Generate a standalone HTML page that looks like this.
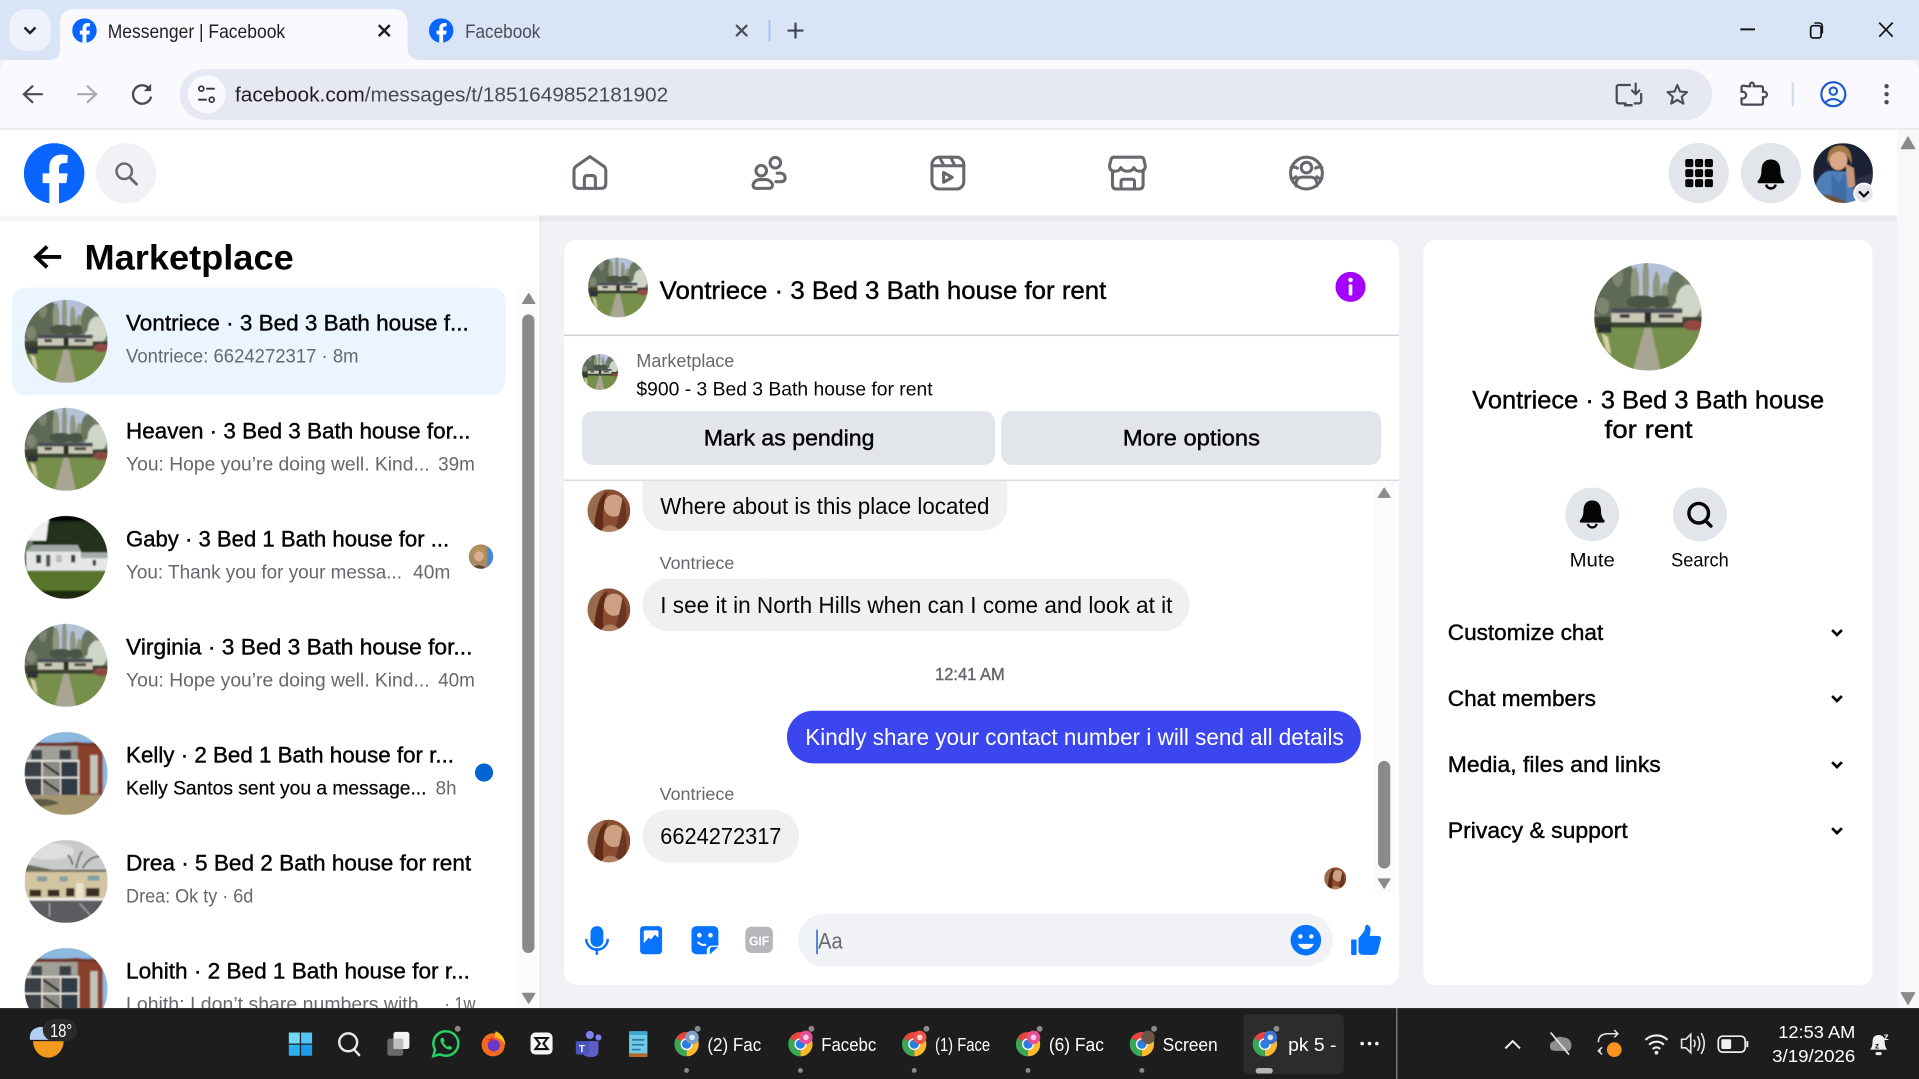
<!DOCTYPE html>
<html><head><meta charset="utf-8"><title>Messenger | Facebook</title>
<style>
html,body{margin:0;padding:0;width:1919px;height:1079px;overflow:hidden;background:#f0f2f5}
svg{display:block;position:absolute;left:0;top:0}
text{font-family:"Liberation Sans",sans-serif;white-space:pre}
.n{font-size:18.5px;fill:#050505;stroke:#050505;stroke-width:.35px}
.s{font-size:16px;fill:#65686c}
.b{font-size:18.5px;fill:#050505}
.t{font-size:15px;fill:#fff}
</style></head><body>
<svg width="1919" height="1079" viewBox="0 0 1568 882" preserveAspectRatio="none" xmlns="http://www.w3.org/2000/svg">
<defs>
<filter id="bl" x="-5%" y="-5%" width="110%" height="110%"><feGaussianBlur stdDeviation="0.8"/></filter>
<clipPath id="cc"><circle cx="50" cy="50" r="50"/></clipPath>
<clipPath id="listclip"><rect x="0" y="176" width="441" height="648"/></clipPath>
<symbol id="h1" viewBox="0 0 100 100"><g clip-path="url(#cc)"><g filter="url(#bl)">
<rect width="100" height="100" fill="#77806c"/>
<path d="M32 0H76V34H32Z" fill="#b4c1d8"/>
<g fill="#5f6a56"><ellipse cx="14" cy="30" rx="20" ry="22"/><ellipse cx="28" cy="18" rx="10" ry="20"/><ellipse cx="30" cy="38" rx="12" ry="8"/></g>
<g fill="#7d856f"><ellipse cx="22" cy="12" rx="5" ry="10"/><ellipse cx="8" cy="40" rx="6" ry="8"/></g>
<g fill="#8f977f"><ellipse cx="38" cy="22" rx="4" ry="18"/><ellipse cx="48" cy="18" rx="3" ry="22"/><ellipse cx="58" cy="24" rx="3.500" ry="16"/><ellipse cx="66" cy="30" rx="4" ry="12"/></g>
<g fill="#4c5544"><ellipse cx="44" cy="36" rx="14" ry="6"/><ellipse cx="62" cy="36" rx="10" ry="6"/></g>
<g fill="#69775e"><ellipse cx="76" cy="26" rx="8" ry="18"/></g>
<g fill="#cfd6c8"><ellipse cx="88" cy="36" rx="12" ry="16"/><ellipse cx="80" cy="44" rx="8" ry="8"/></g>
<rect x="0" y="50" width="100" height="12" fill="#3a4330"/>
<rect x="16" y="43" width="66" height="12" fill="#c9c8b6"/>
<rect x="16" y="42" width="66" height="4.500" fill="#4c4e56"/>
<rect x="24" y="47.500" width="9" height="3.500" fill="#3a3a3a"/><rect x="47" y="46" width="6" height="9" fill="#2c2a26"/><rect x="60" y="47.500" width="14" height="3.500" fill="#4a4a48"/>
<rect x="0" y="60" width="100" height="40" fill="#76904c"/>
<path d="M47 60h6l9 40H36Z" fill="#a8a592"/>
<ellipse cx="92" cy="58" rx="9" ry="5" fill="#8f4a44"/>
<rect x="3" y="57" width="13" height="8" fill="#2f3034"/>
<path d="M7 65l6 4 3 16-5-4Z" fill="#d6cfa8"/>
</g></g></symbol>
<symbol id="h2" viewBox="0 0 100 100"><g clip-path="url(#cc)"><g filter="url(#bl)">
<rect width="100" height="100" fill="#1d2a1c"/>
<rect width="100" height="6" fill="#050505"/>
<path d="M0 0H30L26 30H0Z" fill="#eef0ee"/>
<path d="M28 12Q50 6 100 10V50H30Z" fill="#22331f"/>
<path d="M0 30H10V44H0Z" fill="#6d8268"/>
<path d="M2 43l8-8H64L68 43Z" fill="#a2a6a6"/>
<rect x="2" y="43" width="66" height="24" fill="#e3e6e6"/>
<rect x="66" y="50" width="34" height="17" fill="#e6e8e7"/><rect x="68" y="44" width="32" height="7" fill="#a8acac"/>
<rect x="14" y="47" width="6" height="10" fill="#3c3e3e"/><rect x="26" y="47" width="5" height="14" fill="#555"/><rect x="38" y="47" width="7" height="9" fill="#b8bcbc"/><rect x="56" y="47" width="5" height="9" fill="#3c3e3e"/><rect x="82" y="53" width="4" height="7" fill="#3c3e3e"/>
<rect x="0" y="66" width="100" height="34" fill="#56752a"/>
<rect x="0" y="90" width="100" height="10" fill="#1f2a10"/>
</g></g></symbol>
<symbol id="h3" viewBox="0 0 100 100"><g clip-path="url(#cc)"><g filter="url(#bl)">
<rect width="100" height="100" fill="#8db8e0"/>
<path d="M0 16L62 12 94 16V76H0Z" fill="#8b3f2e"/>
<rect x="0" y="13" width="90" height="4" fill="#6e372c"/>
<rect x="0" y="17" width="64" height="18" fill="#a09f98"/>
<rect x="8" y="22" width="13" height="11" fill="#3a3f44"/><rect x="42" y="22" width="14" height="11" fill="#3a3f44"/>
<rect x="0" y="36" width="20" height="40" fill="#3b4146"/><rect x="22" y="36" width="20" height="40" fill="#8c8b84"/><rect x="44" y="36" width="20" height="40" fill="#2e3a44"/>
<path d="M22 38L42 52M22 58L42 72" stroke="#1a1a1a" stroke-width="2.500"/>
<rect x="0" y="34" width="66" height="2" fill="#ecece8"/><rect x="0" y="54" width="66" height="2" fill="#ecece8"/>
<rect x="20.500" y="34" width="1.500" height="42" fill="#ecece8"/><rect x="42.500" y="34" width="1.500" height="42" fill="#ecece8"/><rect x="64" y="34" width="1.800" height="42" fill="#ecece8"/>
<rect x="79" y="28" width="9" height="46" fill="#c4c4bc"/>
<rect x="0" y="76" width="100" height="24" fill="#a5956e"/>
<path d="M0 82Q30 78 42 86 20 92 0 90Z" fill="#5f5a44"/>
</g></g></symbol>
<symbol id="h4" viewBox="0 0 100 100"><g clip-path="url(#cc)"><g filter="url(#bl)">
<rect width="100" height="100" fill="#c8cacc"/>
<ellipse cx="30" cy="14" rx="30" ry="10" fill="#dcdedf"/>
<path d="M62 34q4-18 8-20M70 34q8-14 20-14M58 30q-2-8-6-12" stroke="#5f5a55" stroke-width="2" fill="none"/>
<path d="M0 30L30 36H74L100 40V72H0Z" fill="#d3c5a2"/>
<path d="M0 29L34 36H100V38.500H0Z" fill="#6a6a5c"/>
<rect x="15" y="44" width="12" height="6" fill="#8a9a9a"/><rect x="42" y="44" width="10" height="6" fill="#8aa0a0"/><rect x="76" y="43" width="14" height="6" fill="#7f9fa8"/>
<rect x="6" y="60" width="14" height="8" fill="#3b2f22"/><rect x="28" y="60" width="14" height="8" fill="#3b2f22"/><rect x="50" y="58" width="10" height="10" fill="#3b2f22"/><rect x="74" y="58" width="16" height="10" fill="#3b2f22"/><rect x="62" y="52" width="9" height="18" fill="#e8e2d0"/>
<rect x="0" y="70" width="100" height="3" fill="#f0eeea"/>
<rect x="0" y="73" width="100" height="27" fill="#5c5d60"/>
<path d="M30 76v16M66 76l16 18" stroke="#c8c8c8" stroke-width="1"/>
</g></g></symbol>
<symbol id="p1" viewBox="0 0 100 100"><g clip-path="url(#cc)"><g filter="url(#bl)">
<rect width="100" height="100" fill="#8a4d33"/>
<ellipse cx="62" cy="38" rx="24" ry="26" fill="#cda084"/>
<path d="M16 100Q16 20 48 6 32 40 38 100Z" fill="#5f2c18"/>
<path d="M0 0H40Q20 30 14 100H0Z" fill="#9a6a4e"/>
<path d="M82 20Q98 50 86 100H62Q76 60 82 20Z" fill="#6a3520"/>
<path d="M30 100Q50 68 80 100Z" fill="#b07e60"/>
</g></g></symbol>
<symbol id="p2" viewBox="0 0 100 100"><g clip-path="url(#cc)"><g filter="url(#bl)">
<rect width="100" height="100" fill="#3f8ad8"/>
<path d="M0 0H76V100H0Z" fill="#a98a64"/>
<ellipse cx="42" cy="46" rx="20" ry="24" fill="#d9ad90"/>
<path d="M16 60Q12 10 42 10 70 12 66 60 60 30 42 28 24 30 16 60Z" fill="#b99358"/>
<path d="M10 100Q40 70 74 100Z" fill="#5b4636"/>
</g></g></symbol>
<symbol id="p3" viewBox="0 0 100 100"><g clip-path="url(#cc)"><g filter="url(#bl)">
<rect width="100" height="100" fill="#1c2236"/>
<path d="M66 60L100 50V100H60Z" fill="#2d2f44"/>
<path d="M0 100Q2 52 26 46L62 48 72 100Z" fill="#4f7fb8"/>
<path d="M30 50L42 66 54 50 56 100H32Z" fill="#3e6ea8"/>
<ellipse cx="42" cy="28" rx="15" ry="17" fill="#d8a888"/>
<path d="M24 34Q22 4 46 4 66 6 64 36 58 16 44 14 30 14 24 34Z" fill="#a57a42"/>
<path d="M54 34L68 42 70 72 58 74Z" fill="#c99578"/>
<path d="M0 88Q26 80 60 100H0Z" fill="#6a5640"/>
</g></g></symbol>
<symbol id="fb" viewBox="0 0 50 50"><circle cx="25" cy="25" r="25" fill="#0866ff"/><path d="M21 50V33H15.500V25H21V20.500C21 13 25 9.500 31.500 9.500 33.500 9.500 35.300 9.800 36.300 10L35.800 16.500 33 16.500C30.300 16.500 29 18 29 20.500V25H36.200L35 33H29V50Z" fill="#fff"/></symbol>
<symbol id="bell" viewBox="0 0 30 30"><path d="M15 2.500C9 2.500 6.700 7 6.700 12.500 6.700 16.500 5.500 19 3.700 21 2.800 22.200 3.400 23.300 4.700 23.300H25.300C26.600 23.300 27.200 22.200 26.300 21 24.500 19 23.300 16.500 23.300 12.500 23.300 7 21 2.500 15 2.500Z" fill="#050505"/><path d="M10.800 24.500A4.300 4.300 0 0 0 19.200 24.500" fill="none" stroke="#050505" stroke-width="2.200"/></symbol>
<symbol id="chrome" viewBox="-11 -11 22 22"><path d="M0 0L-9.500-5.500A11 11 0 0 1 9.500-5.500Z" fill="#e8453c"/><path d="M0 0L9.500-5.500A11 11 0 0 1 0 11Z" fill="#f9bb2d"/><path d="M0 0L0 11A11 11 0 0 1-9.500-5.500Z" fill="#3aa757"/><circle r="5.400" fill="#fff"/><circle r="4.200" fill="#2a7de1"/></symbol>
</defs>

<!-- browser chrome -->
<rect width="1568" height="49" fill="#d9e4f7"/>
<rect x="7.500" y="7.500" width="34" height="34" rx="13" fill="#edf2fc"/>
<path d="M20 22.500l4.500 4.500 4.500-4.500" fill="none" stroke="#1f1f1f" stroke-width="2"/>
<path d="M40 49Q49 49 49 40V19Q49 7.500 61 7.500H321Q333 7.500 333 19V40Q333 49 345 49Z" fill="#f9f9fe"/>
<use href="#fb" x="59" y="15" width="20" height="20"/>
<text x="88" y="31" font-size="15.500" fill="#1f1f1f" textLength="145" lengthAdjust="spacingAndGlyphs">Messenger | Facebook</text>
<path d="M309.500 20.500l9 9m0-9l-9 9" stroke="#1f1f1f" stroke-width="2" fill="none"/>
<use href="#fb" x="350.500" y="15" width="20" height="20"/>
<text x="380" y="31" font-size="15.500" fill="#4a4d55" textLength="61.500" lengthAdjust="spacingAndGlyphs">Facebook</text>
<path d="M601.500 20.500l9 9m0-9l-9 9" stroke="#4a4d55" stroke-width="1.800" fill="none"/>
<rect x="628" y="16" width="1.500" height="18" fill="#a3c0ee"/>
<path d="M650 18.500v13M643.500 25h13" stroke="#3f4450" stroke-width="1.800"/>
<path d="M1422 24h12" stroke="#111" stroke-width="1.600"/>
<rect x="1479.500" y="21" width="8.500" height="10" rx="2" fill="none" stroke="#111" stroke-width="1.400"/><path d="M1482.500 18.800h4a2.500 2.500 0 0 1 2.500 2.500v6" fill="none" stroke="#111" stroke-width="1.300"/>
<path d="M1535.500 18.500l11 11.500m0-11.500l-11 11.500" stroke="#111" stroke-width="1.400"/>

<path d="M0 106V60Q0 49 11 49H1557Q1568 49 1568 60V106Z" fill="#f9f9fe"/>
<rect y="105" width="1568" height="1.200" fill="#dfe1e9"/>
<path d="M35 77H20M27 70l-7.500 7 7.500 7" fill="none" stroke="#474b55" stroke-width="1.800"/>
<path d="M63 77h15M71 70l7.500 7-7.500 7" fill="none" stroke="#a8abb2" stroke-width="1.800"/>
<path d="M122 72.500A7.500 7.500 0 1 0 123.500 79" fill="none" stroke="#474b55" stroke-width="1.900"/><path d="M123.500 68.500v6h-6Z" fill="#474b55"/>
<rect x="147" y="56.500" width="1252" height="41.500" rx="20.700" fill="#e6e9f3"/>
<circle cx="169" cy="77" r="15.500" fill="#f9f9fe"/>
<circle cx="164.500" cy="72.500" r="2" fill="none" stroke="#333" stroke-width="1.400"/><path d="M168.500 72.500h7M162 81.500h7" stroke="#333" stroke-width="1.500"/><circle cx="173" cy="81.500" r="2" fill="none" stroke="#333" stroke-width="1.400"/>
<text x="192" y="83" font-size="16.500" textLength="354" lengthAdjust="spacingAndGlyphs"><tspan fill="#1f1f1f">facebook.com</tspan><tspan fill="#474b55">/messages/t/1851649852181902</tspan></text>
<g transform="translate(1,0)"><path d="M1328 84.500h-6.500a1.500 1.500 0 0 1-1.500-1.500V71a1.500 1.500 0 0 1 1.500-1.500h10M1340 76v7a1.500 1.500 0 0 1-1.500 1.500H1334" fill="none" stroke="#474b55" stroke-width="1.800"/><path d="M1326 85h7v2h-7Z" fill="#474b55"/><path d="M1335.500 67.500v9M1332 73.500l3.500 3.500 3.500-3.500" fill="none" stroke="#474b55" stroke-width="1.700"/></g>
<path d="M1370.500 69.500l2.200 5.300 5.800.5-4.400 3.800 1.400 5.600-5-3-5 3 1.400-5.600-4.400-3.800 5.800-.5Z" fill="none" stroke="#474b55" stroke-width="1.700" stroke-linejoin="round"/>
<g transform="translate(-2,0)"><path d="M1430 70.500h2v-1.500a1.500 1.500 0 0 1 3 0v1.500h6.500a1.500 1.500 0 0 1 1 1.500v3h1a2.200 2.200 0 0 1 0 4.500h-1v5a1 1 0 0 1-1 1H1426a1 1 0 0 1-1-1v-4h1a2.500 2.500 0 0 0 0-5.500h-1v-3.500a1.500 1.500 0 0 1 1-1.500Z" fill="none" stroke="#474b55" stroke-width="1.800"/></g>
<rect x="1464" y="67" width="1.700" height="20" fill="#cfdcf5"/>
<circle cx="1498" cy="77" r="9.800" fill="none" stroke="#1f5bd0" stroke-width="1.800"/><circle cx="1498" cy="74.500" r="3" fill="none" stroke="#1f5bd0" stroke-width="1.700"/><path d="M1491 84q7-6 14 0" fill="none" stroke="#1f5bd0" stroke-width="1.700"/>
<circle cx="1541.500" cy="70.500" r="1.800" fill="#474b55"/><circle cx="1541.500" cy="77" r="1.800" fill="#474b55"/><circle cx="1541.500" cy="83.500" r="1.800" fill="#474b55"/>

<!-- page background -->
<rect y="106" width="1568" height="718" fill="#f0f2f5"/>
<rect x="1550" y="106" width="18" height="718" fill="#f8f8f8"/>
<path d="M1559 112l5.500 9.500h-11Z" fill="#8a8a8a" stroke="#8a8a8a" stroke-linejoin="round"/>
<path d="M1559 821l5.500-9.500h-11Z" fill="#8a8a8a" stroke="#8a8a8a" stroke-linejoin="round"/>

<!-- left panel -->
<rect y="176" width="441" height="648" fill="#fff"/>
<rect x="441" y="176" width="1" height="648" fill="#e4e6ea"/>
<!-- nav -->
<rect y="176" width="1550" height="5" fill="#000" opacity=".03"/>
<rect y="106" width="1550" height="70" fill="#fff"/>
<use href="#fb" x="19.500" y="117" width="49.500" height="49.500"/>
<circle cx="103" cy="141.700" r="24.700" fill="#f0f2f5"/>
<circle cx="101.500" cy="140" r="6.300" fill="none" stroke="#65686c" stroke-width="2"/><path d="M106 145l5.500 5.500" stroke="#65686c" stroke-width="2.400" stroke-linecap="round"/>
<g fill="none" stroke="#65686c" stroke-width="2.500" stroke-linejoin="round" stroke-linecap="round">
<path d="M482 128L493.500 136Q495 137.300 495 139.500V150Q495 154 491 154H473Q469 154 469 150V139.500Q469 137.300 470.500 136Z"/><path d="M477.500 154V146Q477.500 143.500 480 143.500H484Q486.500 143.500 486.500 146V154"/>
<circle cx="633.500" cy="133" r="4.300"/><circle cx="622" cy="139.500" r="4.300"/><path d="M620 146.800h5a6 6 0 0 1 6 3.500q.8 3.700-3 3.700h-9.500q-3.800 0-3-3.700a6 6 0 0 1 4.500-3.500Z"/><path d="M634 148.500h4q3.500 0 3.500-3.200t-3.500-3.800h-3"/>
<rect x="761.500" y="128.500" width="26" height="26" rx="6"/><path d="M762 135.500h25M768 129l3 6M777 129l3 6"/><path d="M771 141v8l7-4Z"/>
<path d="M910 128.500h22.500q1.500 0 2 1.500l1.300 5.500q0 4.500-4.300 4.500-3.700 0-5-3-1.200 3-5.300 3t-5.300-3q-1.300 3-5 3-4.300 0-4.300-4.500l1.300-5.500q.5-1.500 2.600-1.500Z"/><path d="M909 140v11q0 3.500 3.500 3.500h18q3.500 0 3.500-3.500v-11"/><path d="M916 154.500v-6q0-2 2-2h7q2 0 2 2v6"/>
<circle cx="1067.500" cy="141.500" r="13"/><circle cx="1067.500" cy="137" r="4.300"/><path d="M1059 152q-.5-7 5-7.200h7q5.500.200 5 7.200"/><path d="M1055 137q3.500-1 5 .500M1080 137q-3.500-1-5 .500M1055 146q3 0 4-1.500M1080 146q-3 0-4-1.500"/>
</g>
<circle cx="1388" cy="141.500" r="24.600" fill="#e2e5e9"/>
<g fill="#050505"><rect x="1377" y="130" width="6.600" height="6.600" rx="1.500"/><rect x="1385" y="130" width="6.600" height="6.600" rx="1.500"/><rect x="1393" y="130" width="6.600" height="6.600" rx="1.500"/><rect x="1377" y="138.200" width="6.600" height="6.600" rx="1.500"/><rect x="1385" y="138.200" width="6.600" height="6.600" rx="1.500"/><rect x="1393" y="138.200" width="6.600" height="6.600" rx="1.500"/><rect x="1377" y="146.400" width="6.600" height="6.600" rx="1.500"/><rect x="1385" y="146.400" width="6.600" height="6.600" rx="1.500"/><rect x="1393" y="146.400" width="6.600" height="6.600" rx="1.500"/></g>
<circle cx="1447" cy="141.500" r="24.600" fill="#e2e5e9"/>
<use href="#bell" x="1433" y="128" width="28" height="28"/>
<use href="#p3" x="1481.500" y="117" width="49" height="49"/>
<circle cx="1523" cy="158" r="8" fill="#e2e5e9" stroke="#fff" stroke-width="1.500"/><path d="M1519 156.500l4 4 4-4" fill="none" stroke="#050505" stroke-width="1.800"/>

<!-- left list -->
<path d="M50 210H30M38.500 201.500L29.500 210l9 8.500" fill="none" stroke="#050505" stroke-width="3.200"/>
<text x="69" y="220.500" font-size="29px" font-weight="bold" fill="#050505" textLength="171" lengthAdjust="spacingAndGlyphs">Marketplace</text>
<rect x="10" y="235" width="403" height="88" rx="11" fill="#ebf5ff"/>
<g clip-path="url(#listclip)">
<use href="#h1" x="20" y="245" width="68" height="68"/>
<text class="n" x="103" y="270.200" textLength="280" lengthAdjust="spacingAndGlyphs">Vontriece · 3 Bed 3 Bath house f...</text>
<text class="s" x="103" y="296.400" textLength="190" lengthAdjust="spacingAndGlyphs">Vontriece: 6624272317 · 8m</text>

<use href="#h1" x="20" y="333.300" width="68" height="68"/>
<text class="n" x="103" y="358.500" textLength="281.500" lengthAdjust="spacingAndGlyphs">Heaven · 3 Bed 3 Bath house for...</text>
<text class="s" x="103" y="384.700" textLength="248" lengthAdjust="spacingAndGlyphs">You: Hope you’re doing well. Kind...</text>
<text class="s" x="358" y="384.700" textLength="30" lengthAdjust="spacingAndGlyphs">39m</text>

<use href="#h2" x="20" y="421.600" width="68" height="68"/>
<text class="n" x="103" y="446.800" textLength="264" lengthAdjust="spacingAndGlyphs">Gaby · 3 Bed 1 Bath house for ...</text>
<text class="s" x="103" y="473" textLength="225.500" lengthAdjust="spacingAndGlyphs">You: Thank you for your messa...</text>
<text class="s" x="337.500" y="473" textLength="30.500" lengthAdjust="spacingAndGlyphs">40m</text>
<use href="#p2" x="383" y="445" width="20" height="20"/>

<use href="#h1" x="20" y="509.900" width="68" height="68"/>
<text class="n" x="103" y="535.100" textLength="283" lengthAdjust="spacingAndGlyphs">Virginia · 3 Bed 3 Bath house for...</text>
<text class="s" x="103" y="561.300" textLength="248" lengthAdjust="spacingAndGlyphs">You: Hope you’re doing well. Kind...</text>
<text class="s" x="358" y="561.300" textLength="30" lengthAdjust="spacingAndGlyphs">40m</text>

<use href="#h3" x="20" y="598.200" width="68" height="68"/>
<text class="n" x="103" y="623.400" textLength="268" lengthAdjust="spacingAndGlyphs">Kelly · 2 Bed 1 Bath house for r...</text>
<text x="103" y="649.400" font-size="16" fill="#050505" stroke="#050505" stroke-width=".2" textLength="245.500" lengthAdjust="spacingAndGlyphs">Kelly Santos sent you a message...</text>
<text class="s" x="356" y="649.400" textLength="17" lengthAdjust="spacingAndGlyphs">8h</text>
<circle cx="395.500" cy="631.500" r="7.400" fill="#0064d1"/>

<use href="#h4" x="20" y="686.500" width="68" height="68"/>
<text class="n" x="103" y="711.700" textLength="282" lengthAdjust="spacingAndGlyphs">Drea · 5 Bed 2 Bath house for rent</text>
<text class="s" x="103" y="737.900" textLength="104" lengthAdjust="spacingAndGlyphs">Drea: Ok ty · 6d</text>

<use href="#h3" x="20" y="774.800" width="68" height="68"/>
<text class="n" x="103" y="800" textLength="281" lengthAdjust="spacingAndGlyphs">Lohith · 2 Bed 1 Bath house for r...</text>
<text class="s" x="103" y="826.200" textLength="239" lengthAdjust="spacingAndGlyphs">Lohith: I don’t share numbers with</text>
<text class="s" x="363" y="826.200" textLength="25.500" lengthAdjust="spacingAndGlyphs">· 1w</text>
</g>
<rect x="423" y="235" width="18" height="589" fill="#fbfbfb"/>
<path d="M432 240l5 8h-10Z" fill="#8a8a8a" stroke="#8a8a8a" stroke-linejoin="round"/>
<rect x="426.700" y="257" width="10" height="522" rx="5" fill="#8a8a8a"/>
<path d="M432 820l5-8h-10Z" fill="#8a8a8a" stroke="#8a8a8a" stroke-linejoin="round"/>

<!-- center card -->
<rect x="461" y="196" width="682" height="609" rx="10" fill="#fff"/>
<use href="#h1" x="480.500" y="210.500" width="49" height="49"/>
<text x="539" y="244.500" font-size="20.500" fill="#050505" stroke="#050505" stroke-width=".35" textLength="365" lengthAdjust="spacingAndGlyphs">Vontriece · 3 Bed 3 Bath house for rent</text>
<circle cx="1103.500" cy="234.500" r="12.300" fill="#a400ff"/>
<circle cx="1103.500" cy="228.800" r="1.900" fill="#fff"/><rect x="1102" y="232.500" width="3" height="9" rx="1" fill="#fff"/>
<rect x="461" y="273.500" width="682" height="1.200" fill="#ced0d4"/>
<use href="#h1" x="475.500" y="289.300" width="29.500" height="29.500"/>
<text x="520" y="300" font-size="15" fill="#65686c" textLength="80" lengthAdjust="spacingAndGlyphs">Marketplace</text>
<text x="520" y="323.400" font-size="15.500" fill="#050505" textLength="242" lengthAdjust="spacingAndGlyphs">$900 - 3 Bed 3 Bath house for rent</text>
<rect x="475.500" y="336" width="337.500" height="44" rx="9" fill="#e2e5e9"/>
<rect x="818" y="336" width="310.500" height="44" rx="9" fill="#e2e5e9"/>
<text class="n" x="575" y="364" textLength="139.500" lengthAdjust="spacingAndGlyphs">Mark as pending</text>
<text class="n" x="917.500" y="364" textLength="112" lengthAdjust="spacingAndGlyphs">More options</text>

<!-- messages -->
<path d="M525 393H823V413.500A20.500 20.500 0 0 1 802.500 434H545.500A20.500 20.500 0 0 1 525 413.500Z" fill="#f0f0f0"/>
<rect x="461" y="392" width="682" height="1.300" fill="#dcdde0"/>
<use href="#p1" x="480" y="400" width="35" height="35"/>
<text class="b" x="539.500" y="420" style="font-size:19px" textLength="269" lengthAdjust="spacingAndGlyphs">Where about is this place located</text>
<text x="539" y="465" font-size="14.500" fill="#65686c" textLength="61" lengthAdjust="spacingAndGlyphs">Vontriece</text>
<rect x="525" y="473" width="447" height="43" rx="21.500" fill="#f0f0f0"/>
<use href="#p1" x="480" y="481" width="35" height="35"/>
<text class="b" x="539.500" y="501" style="font-size:19px" textLength="418.500" lengthAdjust="spacingAndGlyphs">I see it in North Hills when can I come and look at it</text>
<text x="764" y="556" font-size="14" fill="#65686c" stroke="#65686c" stroke-width=".35" textLength="57" lengthAdjust="spacingAndGlyphs">12:41 AM</text>
<rect x="643" y="581" width="469" height="43" rx="21.500" fill="#3c46ef"/>
<text x="658" y="609" font-size="19" fill="#fff" textLength="440" lengthAdjust="spacingAndGlyphs">Kindly share your contact number i will send all details</text>
<text x="539" y="654" font-size="14.500" fill="#65686c" textLength="61" lengthAdjust="spacingAndGlyphs">Vontriece</text>
<rect x="525" y="662" width="128" height="43" rx="21.500" fill="#f0f0f0"/>
<use href="#p1" x="480" y="670" width="35" height="35"/>
<text class="b" x="539.500" y="690" style="font-size:19px" textLength="99" lengthAdjust="spacingAndGlyphs">6624272317</text>
<use href="#p1" x="1082" y="709" width="18" height="18"/>
<rect x="1123" y="394" width="16" height="336" fill="#fbfbfb"/>
<path d="M1131 399l4.800 7.500h-9.600Z" fill="#8a8a8a" stroke="#8a8a8a" stroke-linejoin="round"/>
<rect x="1126" y="622" width="10" height="88" rx="5" fill="#8a8a8a"/>
<path d="M1131 726l4.800-7.500h-9.600Z" fill="#8a8a8a" stroke="#8a8a8a" stroke-linejoin="round"/>

<!-- input -->
<g fill="#0674ff">
<rect x="482.500" y="757" width="10.500" height="17" rx="5.200"/>
<path d="M479 767.500a8.800 8.800 0 0 0 17.600 0" fill="none" stroke="#0674ff" stroke-width="2"/><rect x="486.700" y="775" width="2" height="5.500"/>
<path d="M526 757h12a3 3 0 0 1 3 3v17a3 3 0 0 1-3 3h-12a3 3 0 0 1-3-3v-17a3 3 0 0 1 3-3Z"/>
<path d="M527 760.500h10a1 1 0 0 1 1 1v5l-3-2.500-3 4-2-1.500-4 4.500v-9.500a1 1 0 0 1 1-1Z" fill="#fff"/>
<path d="M569 757h14a4 4 0 0 1 4 4v12h-5.500a4 4 0 0 0-4 4v3h-8.500a4 4 0 0 1-4-4v-15a4 4 0 0 1 4-4Z"/><path d="M580 780l7-6h-5a2 2 0 0 0-2 2Z"/>
<circle cx="571.500" cy="764.500" r="1.900" fill="#fff"/><circle cx="580.500" cy="764.500" r="1.900" fill="#fff"/>
<path d="M570 770q3.500 3.500 7 2" fill="none" stroke="#fff" stroke-width="1.600"/>
</g>
<rect x="609" y="757.500" width="22.500" height="21.500" rx="5" fill="#b4b6ba"/>
<text x="612" y="773" font-size="10.500" font-weight="bold" fill="#fff" textLength="16.500" lengthAdjust="spacingAndGlyphs">GIF</text>
<rect x="652" y="747" width="437" height="43" rx="21.500" fill="#f0f2f5"/>
<rect x="667" y="760" width="1.200" height="20" fill="#1a5fd0"/>
<text x="668.500" y="775.500" font-size="18.500" fill="#65686c" textLength="20" lengthAdjust="spacingAndGlyphs">Aa</text>
<circle cx="1067" cy="768.500" r="12.500" fill="#0674ff"/>
<circle cx="1062.500" cy="765.500" r="1.800" fill="#fff"/><circle cx="1071.500" cy="765.500" r="1.800" fill="#fff"/><path d="M1060.500 771.500a7 7 0 0 0 13 0Z" fill="#fff"/>
<path d="M1104 768h4.500v11.500a1.200 1.200 0 0 1-1.200 1.200h-2.100a1.200 1.200 0 0 1-1.200-1.200Z" fill="#0674ff"/>
<path d="M1110 767l4-5q1.500-2 1.500-5 .500-1.500 2-1 3 1.200 2.300 5.500l-.8 3.500h6.500q3.500 0 2.800 3l-2.500 10q-.7 2.500-3.300 2.500H1114q-4 0-4-3Z" fill="#0674ff"/>

<!-- right card -->
<rect x="1163" y="196" width="367" height="609" rx="10" fill="#fff"/>
<use href="#h1" x="1302.500" y="215" width="88" height="88"/>
<text x="1203" y="334" font-size="20.500" fill="#050505" stroke="#050505" stroke-width=".35" textLength="287.500" lengthAdjust="spacingAndGlyphs">Vontriece · 3 Bed 3 Bath house</text>
<text x="1311" y="358" font-size="20.500" fill="#050505" stroke="#050505" stroke-width=".35" textLength="72" lengthAdjust="spacingAndGlyphs">for rent</text>
<circle cx="1301" cy="420.500" r="22" fill="#e2e5e9"/>
<use href="#bell" x="1288" y="407" width="26" height="26"/>
<circle cx="1389" cy="420.500" r="22" fill="#e2e5e9"/>
<circle cx="1388" cy="419.500" r="8" fill="none" stroke="#050505" stroke-width="2.800"/><path d="M1393.500 425.500l4.500 4.500" stroke="#050505" stroke-width="2.800" stroke-linecap="round"/>
<text x="1282.500" y="463" font-size="16" fill="#050505" textLength="37" lengthAdjust="spacingAndGlyphs">Mute</text>
<text x="1365.500" y="463" font-size="16" fill="#050505" textLength="47" lengthAdjust="spacingAndGlyphs">Search</text>
<text class="n" x="1183" y="523" textLength="127" lengthAdjust="spacingAndGlyphs">Customize chat</text>
<text class="n" x="1183" y="577" textLength="121" lengthAdjust="spacingAndGlyphs">Chat members</text>
<text class="n" x="1183" y="631" textLength="174" lengthAdjust="spacingAndGlyphs">Media, files and links</text>
<text class="n" x="1183" y="685" textLength="147" lengthAdjust="spacingAndGlyphs">Privacy &amp; support</text>
<g fill="none" stroke="#050505" stroke-width="2.200"><path d="M1497 515l4 4 4-4"/><path d="M1497 569l4 4 4-4"/><path d="M1497 623l4 4 4-4"/><path d="M1497 677l4 4 4-4"/></g>

<!-- taskbar -->
<rect y="824" width="1568" height="58" fill="#1d1d1d"/>
<rect y="824" width="1568" height="1" fill="#2e2e2e"/>
<rect x="1140.800" y="824" width="1" height="58" fill="#8a8a8a"/>
<path d="M24.500 850q-1-8 6-10 5-2 8 3 3 1 2 7Z" fill="#b4cdf2"/>
<path d="M27 851H52A12.500 13.500 0 0 1 27 851Z" fill="#f39a1e"/>
<rect x="35" y="833" width="28" height="18" rx="9" fill="#2a2a2a"/>
<text x="41" y="847.500" font-size="15" fill="#fff" textLength="18" lengthAdjust="spacingAndGlyphs">18°</text>
<g><rect x="236" y="844" width="9" height="9" fill="#6fd8f5"/><rect x="246" y="844" width="9" height="9" fill="#4fc6f3"/><rect x="236" y="854" width="9" height="9" fill="#2bb0f0"/><rect x="246" y="854" width="9" height="9" fill="#1a9ceb"/></g>
<circle cx="284.500" cy="852" r="7.300" fill="none" stroke="#e8e8e8" stroke-width="2"/><path d="M289.500 858l4.500 5" stroke="#e8e8e8" stroke-width="2"/>
<rect x="316.500" y="849" width="13" height="14" rx="2" fill="#6a6a6a"/><rect x="321.500" y="843.500" width="13" height="14" rx="2" fill="#f2f2f2"/><rect x="321.500" y="849" width="8" height="8.500" fill="#bdbdbd"/>
<path d="M364.500 843a10 10 0 0 1 0 20q-2.700 0-5-1.200l-5.500 1.500 1.500-5.200a10 10 0 0 1 9-15.100Z" fill="none" stroke="#25d366" stroke-width="2"/><path d="M360.500 848.500q-1.500 2 .5 5 2.500 4 6 4.500 2 .2 2.700-1.500l-2.500-1.800-1.500 1q-2-1-3.300-3.500l1-1.500-1.200-2.500Z" fill="#25d366"/>
<circle cx="374" cy="841" r="2.400" fill="#8a8a8a"/>
<circle cx="403" cy="854" r="9.500" fill="#f36a21"/><path d="M405 843q7 3 8 11-4-6-9-6Z" fill="#ffc01e"/><circle cx="403.500" cy="854.500" r="5" fill="#6b37c9"/><path d="M395 848q3 4 8-1-1 3 1 4-5 0-9-3Z" fill="#e8322f"/>
<rect x="433.500" y="844" width="18" height="18" rx="4" fill="#f5f5f5"/><path d="M437.500 848.500h10l-3.500 4.500 3.500 4.500h-10l3.500-4.500Z" fill="none" stroke="#111" stroke-width="1.700"/>
<g transform="translate(-2,0)"><circle cx="484" cy="846" r="3.300" fill="#7b83eb"/><circle cx="491" cy="848" r="2.500" fill="#7b83eb"/><path d="M477 851h14v9q-.5 4-6 4-7 0-8-5Z" fill="#5b5fc7"/><rect x="472.500" y="851" width="11" height="11" rx="1.500" fill="#4b53bc"/>
<text x="475" y="860" font-size="8" font-weight="bold" fill="#fff">T</text></g>
<rect x="514" y="843" width="15" height="21" rx="1" fill="#6fcbe8"/><rect x="514" y="843" width="15" height="3" fill="#3fa7d0"/><rect x="514" y="861" width="15" height="3" fill="#b46a2a"/><path d="M516.500 850h10M516.500 854h10M516.500 858h7" stroke="#2f7fa8" stroke-width="1.500"/>
<!-- chrome taskbar items -->
<use href="#chrome" x="551" y="843.500" width="20" height="20"/><circle cx="565.500" cy="848" r="5.500" fill="#7aa0c8"/><circle cx="565.500" cy="848" r="2.300" fill="#dfe8f2"/><circle cx="570" cy="841" r="2.400" fill="#8a8a8a"/>
<text class="t" x="578" y="859" textLength="44" lengthAdjust="spacingAndGlyphs">(2) Fac</text>
<use href="#chrome" x="644" y="843.500" width="20" height="20"/><circle cx="658.500" cy="848" r="5.500" fill="#e64e9a"/><circle cx="658.500" cy="848" r="2.300" fill="#f6d0e4"/><circle cx="663" cy="841" r="2.400" fill="#8a8a8a"/>
<text class="t" x="671" y="859" textLength="45" lengthAdjust="spacingAndGlyphs">Facebc</text>
<use href="#chrome" x="737" y="843.500" width="20" height="20"/><circle cx="751.500" cy="848" r="5.500" fill="#e5534b"/><circle cx="751.500" cy="848" r="2.300" fill="#f6d5d2"/><circle cx="757" cy="841" r="2.400" fill="#8a8a8a"/>
<text class="t" x="764" y="859" textLength="45" lengthAdjust="spacingAndGlyphs">(1) Face</text>
<use href="#chrome" x="830" y="843.500" width="20" height="20"/><circle cx="844.500" cy="848" r="5.500" fill="#e64e9a"/><circle cx="844.500" cy="848" r="2.300" fill="#f6d0e4"/><circle cx="849.500" cy="841" r="2.400" fill="#8a8a8a"/>
<text class="t" x="857" y="859" textLength="45" lengthAdjust="spacingAndGlyphs">(6) Fac</text>
<use href="#chrome" x="923" y="843.500" width="20" height="20"/><circle cx="938" cy="848" r="5.500" fill="#6b5548"/><circle cx="943" cy="841" r="2.400" fill="#8a8a8a"/>
<text class="t" x="950" y="859" textLength="45" lengthAdjust="spacingAndGlyphs">Screen</text>
<rect x="1016" y="829" width="82" height="49" rx="4" fill="#2c2c2c"/>
<use href="#chrome" x="1023.500" y="843.500" width="20" height="20"/><circle cx="1038" cy="848" r="5.500" fill="#3e72d0"/><circle cx="1038" cy="848" r="2.300" fill="#d6e2f6"/><circle cx="1043" cy="841" r="2.400" fill="#8a8a8a"/>
<text class="t" x="1052.500" y="859" textLength="39.500" lengthAdjust="spacingAndGlyphs">pk 5 -</text>
<g fill="#8a8a8a"><circle cx="561" cy="875" r="2"/><circle cx="654" cy="875" r="2"/><circle cx="747" cy="875" r="2"/><circle cx="840" cy="875" r="2"/><circle cx="933" cy="875" r="2"/></g>
<rect x="1026" y="873" width="14" height="4.500" rx="2.200" fill="#b5b5b5"/>
<g fill="#f2f2f2"><circle cx="1113" cy="853" r="1.500"/><circle cx="1119" cy="853" r="1.500"/><circle cx="1125" cy="853" r="1.500"/></g>
<path d="M1230 857l6-6 6 6" fill="none" stroke="#f2f2f2" stroke-width="1.600"/>
<path d="M1267 858q-2-6 3-7 2-5 7-3 6 0 7 6 0 5-3 5h-11Z" fill="#8e8e8e"/><path d="M1267 844l15 18" stroke="#e8e8e8" stroke-width="1.400"/>
<g transform="translate(-1,0)"><path d="M1307 852q0-7 8-7h8M1320 842l3 3-3 3M1310 862l-3-3 3-3M1307 859h2" fill="none" stroke="#e8e8e8" stroke-width="1.200"/><circle cx="1320" cy="858" r="6" fill="#f7931e"/></g>
<g fill="none" stroke="#f0f0f0" stroke-width="1.700"><path d="M1344.500 850a13 13 0 0 1 18 0"/><path d="M1347.500 854a8.500 8.500 0 0 1 12 0"/><path d="M1350.500 857.500a4 4 0 0 1 6 0"/></g><circle cx="1353.500" cy="860.500" r="1.500" fill="#f0f0f0"/>
<path d="M1374 849.500h3.500l4-4v15l-4-4H1374Z" fill="none" stroke="#e8e8e8" stroke-width="1.300"/><path d="M1384 850q2 3 0 6M1387 847q3.500 6 0 12M1390 844.500q5 8.500 0 17" fill="none" stroke="#e8e8e8" stroke-width="1.300"/>
<rect x="1404" y="847" width="22" height="13" rx="3.500" fill="none" stroke="#f0f0f0" stroke-width="1.400"/><rect x="1406.500" y="849.500" width="8" height="8" rx="1" fill="#f0f0f0"/><rect x="1427" y="851" width="1.500" height="5" fill="#f0f0f0"/>
<text x="1453" y="848.300" font-size="14.500" fill="#fff" textLength="63" lengthAdjust="spacingAndGlyphs">12:53 AM</text>
<text x="1448" y="868" font-size="14.500" fill="#fff" textLength="68" lengthAdjust="spacingAndGlyphs">3/19/2026</text>
<path d="M1535 846q-5 0-5 6 0 4-2 6h14q-2-2-2-6 0-6-5-6Z" fill="#f0f0f0"/><rect x="1532.500" y="860" width="5" height="2.500" rx="1" fill="#f0f0f0"/>
<text x="1539" y="850" font-size="8.500" font-weight="bold" fill="#f0f0f0">z</text><text x="1532" y="857" font-size="7" font-weight="bold" fill="#1d1d1d">z</text>
</svg>
</body></html>
